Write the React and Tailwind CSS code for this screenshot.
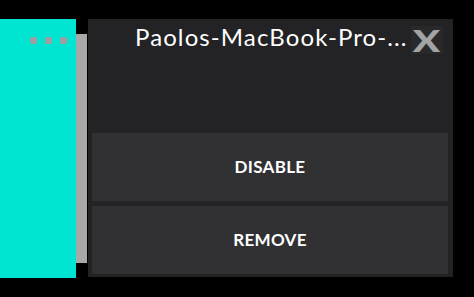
export default function App() {
  return (
    <div className="w-[474px] h-[297px] bg-black flex items-start pt-[19px] font-['Lato','Liberation_Sans',sans-serif] overflow-hidden">
      {/* Tile */}
      <div className="w-[76px] h-[259px] bg-[#00e5d1] flex justify-end pt-[18px] pr-[9px]">
        <div className="flex items-start gap-[8px] h-[7px]">
          <div className="w-[7px] h-[7px] shrink-0 rounded-[2px] bg-[#a29ea2]" />
          <div className="w-[7px] h-[7px] shrink-0 rounded-[2px] bg-[#a29ea2]" />
          <div className="w-[7px] h-[7px] shrink-0 rounded-[2px] bg-[#a29ea2]" />
        </div>
      </div>
      <div className="w-[11px] h-[229px] mt-[15px] bg-[#a8a8a8]" />
      <div className="w-px" />

      {/* Popover */}
      <div className="w-[365px] h-[258px] bg-[#232325] flex flex-col pl-[4px] pr-[5px] pb-[3px]">
        <div className="h-[114px] flex items-start pt-[5px] pl-[43px]">
          <span className="text-white text-[24px] leading-[26px] tracking-[1.1px] whitespace-nowrap">
            Paolos-MacBook-Pro-...
          </span>
          <div className="ml-[3px] mt-[2px] w-[32px] h-[28px] bg-[#29292b] flex items-center justify-center">
            <span className="text-[#a3a3a3] text-[31px] font-black leading-none scale-x-[1.3]">X</span>
          </div>
        </div>
        <button className="h-[68px] bg-[#313133] text-white text-[17px] font-bold tracking-[0.3px]">
          DISABLE
        </button>
        <div className="h-[5px]" />
        <button className="h-[68px] bg-[#313133] text-white text-[17px] font-bold tracking-[0.3px]">
          REMOVE
        </button>
      </div>
    </div>
  );
}
